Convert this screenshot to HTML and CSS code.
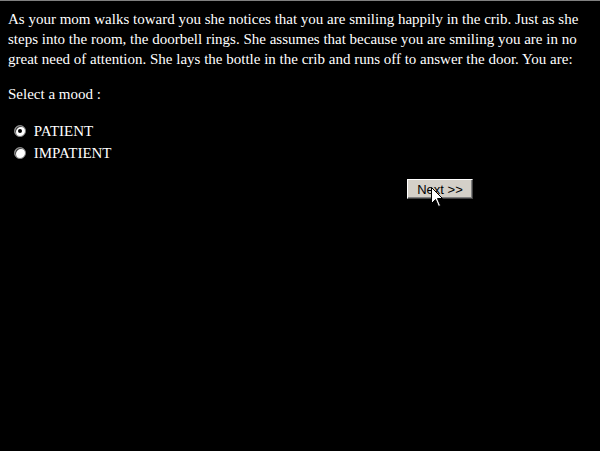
FILE: index.html
```html
<!DOCTYPE html>
<html>
<head>
<meta charset="utf-8">
<link rel="stylesheet" href="styles.css">
</head>
<body>
<div class="topline"></div>
<div class="page">
  <p class="story">As your mom walks toward you she notices that you are smiling happily in the crib. Just as she steps into the room, the doorbell rings. She assumes that because you are smiling you are in no great need of attention. She lays the bottle in the crib and runs off to answer the door. You are:</p>
  <p class="prompt">Select a mood :</p>
  <form class="moods">
    <label class="opt"><input type="radio" name="mood" value="patient" checked> PATIENT</label>
    <label class="opt"><input type="radio" name="mood" value="impatient"> IMPATIENT</label>
    <div class="actions">
      <button type="button" class="next">Next &gt;&gt;</button>
      <svg class="cursor" width="12" height="20" viewBox="0 0 12 20"><path d="M0.5 0.5 L0.5 16.5 L4.5 12.5 L7.5 19.5 L9.5 18.5 L6.5 11.5 L11.5 11.5 Z" fill="#fff" stroke="#000" stroke-width="1"/></svg>
    </div>
  </form>
</div>
</body>
</html>
```
FILE: styles.css
```css
html, body {
  margin: 0;
  padding: 0;
  background: #000;
}
.topline {
  height: 1px;
  background: #808080;
}
.page {
  padding: 8px;
  color: #fff;
  font-family: "Liberation Serif", "Times New Roman", serif;
  font-size: 15px;
}
.story {
  margin: 0 0 15px;
  line-height: 20px;
}
.prompt {
  margin: 0 0 16px;
  line-height: 20px;
}
.moods {
  margin: 0;
}
.opt {
  display: flex;
  align-items: center;
  height: 22px;
  line-height: 22px;
  white-space: pre;
}
.opt input {
  appearance: none;
  -webkit-appearance: none;
  margin: 0 4px 0 6px;
  width: 12px;
  height: 12px;
  border-radius: 50%;
  background: #fff;
  border: 1px solid #808080;
  box-shadow: inset 1px 1px 0 #404040;
  display: grid;
  place-items: center;
}
.opt input:checked::after {
  content: "";
  width: 4px;
  height: 4px;
  border-radius: 50%;
  background: #000;
}
.actions {
  position: relative;
  padding: 15px 0 0 399px;
}
.next {
  width: 66px;
  height: 20px;
  padding: 0;
  background: #d4d0c8;
  color: #000;
  font-family: "Liberation Sans", Arial, sans-serif;
  font-size: 13px;
  border-style: solid;
  border-width: 1px;
  border-color: #fff #404040 #404040 #fff;
  box-shadow: inset -1px -1px 0 #808080;
}
.cursor {
  position: absolute;
  left: 423px;
  top: 23px;
}
```
